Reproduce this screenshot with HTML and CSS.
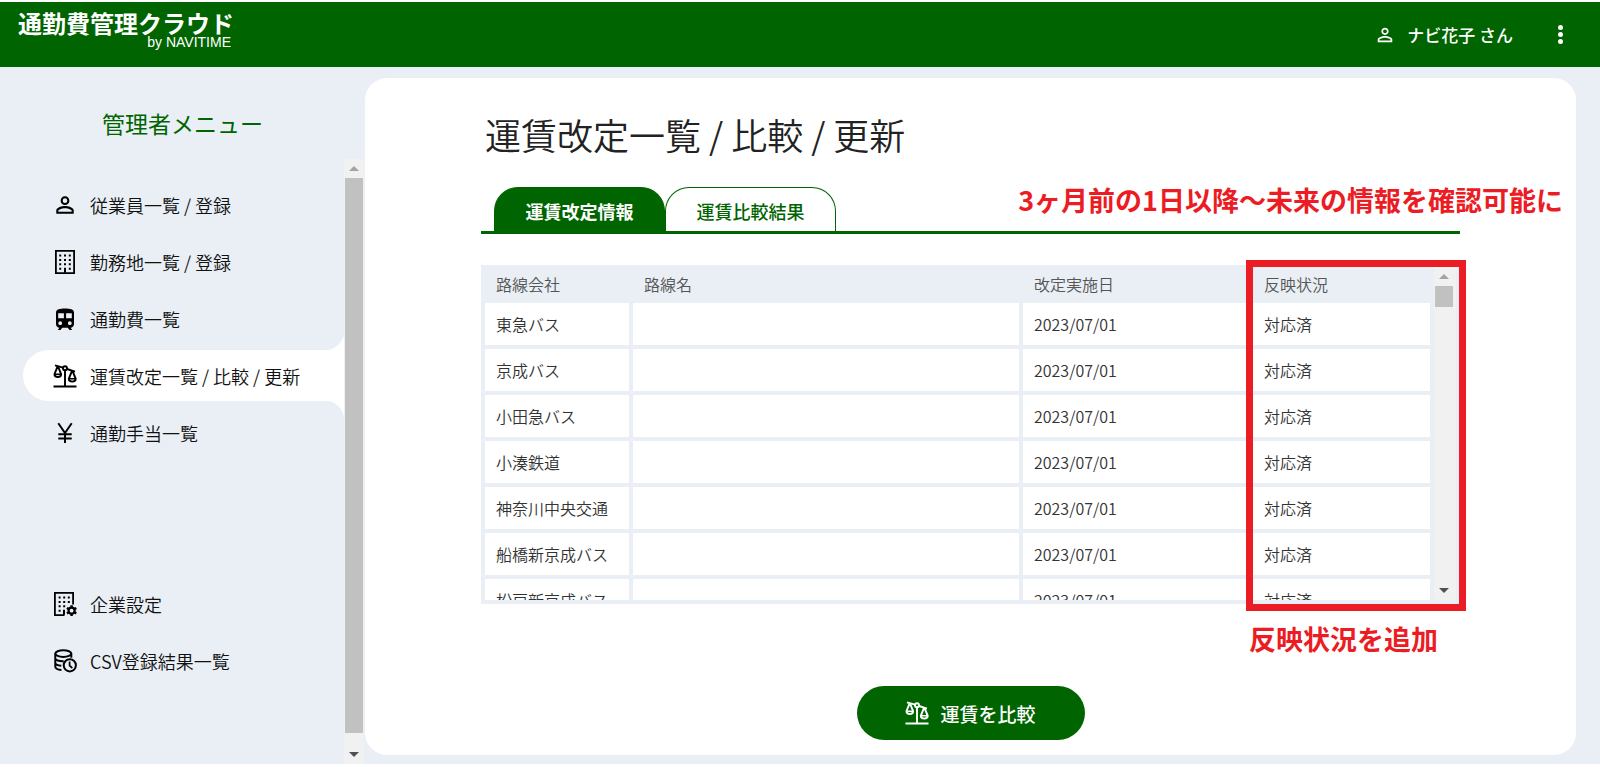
FILE: index.html
```html
<!DOCTYPE html>
<html lang="ja">
<head>
<meta charset="utf-8">
<meta name="viewport" content="width=device-width, initial-scale=1">
<title>通勤費管理クラウド</title>
<link rel="stylesheet" href="styles.css">
</head>
<body>
<svg class="defs" aria-hidden="true">
  <symbol id="i-person" viewBox="1 1 22 22"><path fill="currentColor" d="M12 5.9a2.1 2.1 0 110 4.2 2.1 2.1 0 010-4.2m0 9c2.97 0 6.1 1.46 6.1 2.1v1.1H5.9V17c0-.64 3.13-2.1 6.1-2.1M12 4C9.79 4 8 5.79 8 8s1.79 4 4 4 4-1.79 4-4-1.79-4-4-4zm0 9c-2.67 0-8 1.34-8 4v3h16v-3c0-2.66-5.33-4-8-4z"/></symbol>
  <symbol id="i-building" viewBox="0 0 24 26"><path fill="none" stroke="currentColor" stroke-width="1.8" d="M2.9 1.9h18.2v22.2H2.9z"/><path stroke="currentColor" stroke-width="2" stroke-dasharray="2 2.8" d="M6.2 6.5h12M6.2 10.9h12M6.2 15.3h12"/><path stroke="currentColor" stroke-width="2" d="M6.2 19.7h2M15.8 19.7h2M12 18.7v5"/></symbol>
  <symbol id="i-train" viewBox="0 0 24 26"><path fill="currentColor" fill-rule="evenodd" d="M12 2.4c-5 0-9 .6-9 4.4v11.1c0 2.1 1.5 3.6 3.4 3.8L4.8 24h2.6l1.9-2.2h5.4l1.9 2.2h2.6l-1.6-2.3c1.900-.2 3.400-1.700 3.400-3.800V6.800c0-3.800-4-4.400-9-4.400zM5.200 7.200h5.700v5H5.200zM13.100 7.200h5.700v5h-5.700zM7.200 15.300a1.900 1.900 0 100 3.800 1.900 1.900 0 000-3.800zM16.800 15.300a1.900 1.900 0 100 3.800 1.900 1.900 0 000-3.800z"/></symbol>
  <symbol id="i-scale" viewBox="0 0 24 24"><g fill="none" stroke="currentColor" stroke-width="1.9"><circle cx="12" cy="4.300" r="2"/><path d="M2 1.400l8 2.200M14 5l8 2.600M12 6.300v15.500M.500 22.500h23"/><path d="M4.600 2.400L1.500 10.200c0 3.700 6.600 3.700 6.600 0L5 2.400M19 6.800l-3.200 8c0 3.700 6.900 3.700 6.900 0l-3.200-8"/><path stroke-width="1.500" d="M1.500 10.200h6.600M15.800 14.800h6.900"/></g></symbol>
  <symbol id="i-yen" viewBox="0 0 24 24"><path fill="none" stroke="currentColor" stroke-width="2" d="M5.300 2.300L12 12l6.700-9.700M12 12v10M5.300 13.200h13.400M5.300 17.500h13.400"/></symbol>
  <symbol id="i-company" viewBox="0 0 24 26"><path fill="none" stroke="currentColor" stroke-width="1.800" d="M20.100 13.500V1.900H1.900v22.200h9.600"/><path stroke="currentColor" stroke-width="2" stroke-dasharray="2 2.600" d="M5.600 6.500h12M5.600 10.900h12M5.600 15.300h7"/><path stroke="currentColor" stroke-width="2" d="M5.600 19.700h2M11 18.700v5"/><circle cx="18.600" cy="19.700" r="3" fill="none" stroke="currentColor" stroke-width="2.200"/><path stroke="currentColor" stroke-width="2.400" d="M18.600 16.500v-2.200M18.600 22.900v2.200M21.400 18.100l1.900-1.100M15.800 21.300l-1.900 1.100M21.400 21.300l1.900 1.100M15.800 18.100l-1.900-1.100"/></symbol>
  <symbol id="i-data" viewBox="0 0 24 24"><g fill="none" stroke="currentColor" stroke-width="2"><ellipse cx="10.300" cy="4.600" rx="8" ry="3.300"/><path d="M2.300 4.600v13.200c0 1.700 2.700 2.900 6.200 3.200M18.300 4.600v4.200M2.300 9.200c0 1.800 3.600 3.200 8.400 3M2.300 13.700c0 1.500 2.400 2.700 6 3"/><circle cx="16.800" cy="16.300" r="6.100"/><path stroke-width="1.700" d="M16.600 12.600v4.100l2.700 2.300"/></g></symbol>
</svg>

<header class="header">
  <div class="logo">
    <span class="logo-name">通勤費管理クラウド</span>
    <span class="logo-by">by NAVITIME</span>
  </div>
  <div class="account">
    <svg class="account-icon" aria-hidden="true"><use href="#i-person"/></svg>
    <span>ナビ花子 さん</span>
    <button class="more" type="button" aria-label="メニューを開く"><i></i><i></i><i></i></button>
  </div>
</header>

<div class="layout">
  <aside class="sidebar">
    <h2 class="sidebar-title">管理者メニュー</h2>
    <div class="sidebar-body">
      <nav class="nav">
        <a class="nav-item" href="#"><svg aria-hidden="true"><use href="#i-person"/></svg>従業員一覧 / 登録</a>
        <a class="nav-item" href="#"><svg aria-hidden="true"><use href="#i-building"/></svg>勤務地一覧 / 登録</a>
        <a class="nav-item" href="#"><svg aria-hidden="true"><use href="#i-train"/></svg>通勤費一覧</a>
        <a class="nav-item nav-item-active" href="#" aria-current="page"><svg aria-hidden="true"><use href="#i-scale"/></svg>運賃改定一覧 / 比較 / 更新</a>
        <a class="nav-item" href="#"><svg aria-hidden="true"><use href="#i-yen"/></svg>通勤手当一覧</a>
        <a class="nav-item nav-item-spaced" href="#"><svg aria-hidden="true"><use href="#i-company"/></svg>企業設定</a>
        <a class="nav-item" href="#"><svg aria-hidden="true"><use href="#i-data"/></svg>CSV登録結果一覧</a>
      </nav>
      <div class="scrollbar" aria-hidden="true">
        <span class="arrow arrow-up"></span>
        <span class="thumb thumb-long"></span>
        <span class="arrow arrow-down"></span>
      </div>
    </div>
  </aside>

  <main class="panel">
    <h1 class="title">運賃改定一覧 / 比較 / 更新</h1>
    <div class="tabs" role="tablist">
      <button class="tab tab-active" type="button" role="tab" aria-selected="true">運賃改定情報</button>
      <button class="tab" type="button" role="tab" aria-selected="false">運賃比較結果</button>
      <p class="note note-period">3ヶ月前の1日以降～未来の情報を確認可能に</p>
    </div>

    <div class="fares">
      <div class="fares-view">
        <table class="fares-table">
          <colgroup><col class="col-company"><col><col class="col-date"><col class="col-status"></colgroup>
          <thead>
            <tr><th scope="col">路線会社</th><th scope="col">路線名</th><th scope="col">改定実施日</th><th scope="col">反映状況</th></tr>
          </thead>
          <tbody>
            <tr><td>東急バス</td><td></td><td>2023/07/01</td><td>対応済</td></tr>
            <tr><td>京成バス</td><td></td><td>2023/07/01</td><td>対応済</td></tr>
            <tr><td>小田急バス</td><td></td><td>2023/07/01</td><td>対応済</td></tr>
            <tr><td>小湊鉄道</td><td></td><td>2023/07/01</td><td>対応済</td></tr>
            <tr><td>神奈川中央交通</td><td></td><td>2023/07/01</td><td>対応済</td></tr>
            <tr><td>船橋新京成バス</td><td></td><td>2023/07/01</td><td>対応済</td></tr>
            <tr><td>松戸新京成バス</td><td></td><td>2023/07/01</td><td>対応済</td></tr>
          </tbody>
        </table>
        <div class="scrollbar" aria-hidden="true">
          <span class="arrow arrow-up"></span>
          <span class="thumb thumb-short"></span>
          <span class="arrow arrow-down"></span>
        </div>
      </div>
      <div class="highlight"></div>
      <p class="note note-status">反映状況を追加</p>
    </div>

    <button class="compare" type="button"><svg aria-hidden="true"><use href="#i-scale"/></svg>運賃を比較</button>
  </main>
</div>
</body>
</html>
```

FILE: styles.css
```css
:root {
  --green: #006400;
  --base: #e9eff5;
  --red: #ec1c24;
}

* {
  box-sizing: border-box;
}

body {
  display: flex;
  flex-direction: column;
  min-height: 100vh;
  margin: 0;
  padding: 2px 0 3px;
  background: #fff;
  color: #111;
  font-family: "Noto Sans CJK JP", sans-serif;
  font-size: 16px;
  overflow: hidden;
}

h1, h2, p {
  margin: 0;
}

button {
  border: 0;
  font-family: inherit;
  cursor: pointer;
}

.defs {
  position: absolute;
  width: 0;
  height: 0;
}

/* Header */
.header {
  display: flex;
  justify-content: space-between;
  height: 65px;
  padding: 0 33px 0 18px;
  background: var(--green);
  color: #fff;
}

.logo {
  display: flex;
  flex-direction: column;
  align-items: flex-end;
  padding-top: 9px;
}

.logo-name {
  font-size: 24px;
  font-weight: 700;
  line-height: 24px;
}

.logo-by {
  padding-right: 3px;
  font-family: "Liberation Sans", Arial, sans-serif;
  font-size: 14px;
  line-height: 15px;
}

.account {
  display: flex;
  align-items: center;
  font-size: 17px;
  font-weight: 500;
}

.account-icon {
  width: 20px;
  height: 20px;
  margin-right: 12px;
}

.more {
  display: flex;
  flex-direction: column;
  gap: 2px;
  margin-left: 41px;
  padding: 4px;
  background: none;
}

.more i {
  width: 5px;
  height: 5px;
  border-radius: 50%;
  background: #fff;
}

/* Layout */
.layout {
  display: flex;
  flex: 1;
  background: var(--base);
}

.sidebar {
  display: flex;
  flex-direction: column;
  flex: 0 0 365px;
}

.sidebar-title {
  padding: 39px 0 19px;
  color: var(--green);
  font-size: 23px;
  font-weight: 400;
  line-height: 34px;
  text-align: center;
}

.sidebar-body {
  display: flex;
  flex: 1;
}

.nav {
  display: flex;
  flex: 1;
  flex-direction: column;
  gap: 6px;
  padding: 20px 0 0 23px;
}

.nav-item {
  position: relative;
  display: flex;
  align-items: center;
  gap: 13px;
  height: 51px;
  padding-left: 30px;
  border-radius: 26px 0 0 26px;
  color: #111;
  font-size: 18px;
  font-weight: 350;
  text-decoration: none;
}

.nav-item svg {
  width: 24px;
  height: 26px;
  color: #000;
}

.nav-item-active {
  background: #fff;
}

.nav-item-active::before,
.nav-item-active::after {
  content: "";
  position: absolute;
  right: 0;
  width: 20px;
  height: 20px;
}

.nav-item-active::before {
  bottom: 100%;
  background: radial-gradient(circle at 0 0, transparent 20px, #fff 21px);
}

.nav-item-active::after {
  top: 100%;
  background: radial-gradient(circle at 0 100%, transparent 20px, #fff 21px);
}

.nav-item-spaced {
  margin-top: 114px;
}

/* Scrollbars */
.scrollbar {
  display: flex;
  flex: 0 0 20px;
  flex-direction: column;
  align-items: center;
  background: #f1f1f1;
}

.sidebar .scrollbar {
  margin-right: 1px;
}

.fares .scrollbar {
  flex-basis: 22px;
  padding: 2px 3px 0 0;
}

.arrow {
  margin: 7px 0;
  border: 5px solid transparent;
}

.arrow-up {
  border-top: 0;
  border-bottom-color: #a3a3a3;
}

.arrow-down {
  margin-top: auto;
  border-top-color: #505050;
  border-bottom: 0;
}

.thumb {
  width: 18px;
  background: #c1c1c1;
}

.thumb-long {
  flex: 1;
  margin-bottom: 19px;
}

.thumb-short {
  height: 21px;
}

/* Main panel */
.panel {
  display: flex;
  flex: 1;
  flex-direction: column;
  margin: 11px 24px 9px 0;
  padding: 30px 116px 15px;
  border-radius: 22px;
  background: #fff;
}

.title {
  padding-left: 4px;
  color: #222;
  font-size: 36px;
  font-weight: 350;
  line-height: 52px;
}

.tabs {
  position: relative;
  display: flex;
  margin-top: 27px;
  padding-left: 13px;
  border-bottom: 3px solid var(--green);
}

.tab {
  width: 171px;
  height: 44px;
  padding: 3px 0 0;
  border: 1px solid var(--green);
  border-bottom: 0;
  border-radius: 24px 24px 0 0;
  background: #fff;
  color: var(--green);
  font-size: 18px;
  font-weight: 500;
}

.tab-active {
  background: var(--green);
  color: #fff;
  font-weight: 700;
}

.note {
  position: absolute;
  color: var(--red);
  font-size: 27px;
  font-weight: 700;
  line-height: 36px;
  white-space: nowrap;
}

.note-period {
  right: -103px;
  bottom: 13px;
}

.fares {
  position: relative;
  margin-top: 31px;
}

.fares-view {
  display: flex;
  height: 339px;
  border-right: 4px solid var(--base);
  border-bottom: 4px solid var(--base);
  background: var(--base);
  overflow: hidden;
}

.fares-table {
  flex: 1;
  border-spacing: 4px;
  table-layout: fixed;
}

.col-company {
  width: 144px;
}

.col-date {
  width: 226px;
}

.col-status {
  width: 177px;
}

.fares-table th,
.fares-table td {
  padding: 0 11px;
  font-weight: 350;
  text-align: left;
  white-space: nowrap;
}

.fares-table th {
  height: 30px;
  color: #555;
  line-height: 30px;
}

.fares-table td {
  height: 42px;
  background: #fff;
  color: #333;
  line-height: 42px;
}

.highlight {
  position: absolute;
  top: -5px;
  right: -6px;
  bottom: -7px;
  width: 220px;
  border: 7px solid var(--red);
}

.note-status {
  top: 356px;
  right: 22px;
}

.compare {
  display: flex;
  align-items: center;
  align-self: center;
  justify-content: center;
  gap: 11px;
  width: 228px;
  height: 54px;
  margin-top: auto;
  border-radius: 27px;
  background: var(--green);
  color: #fff;
  font-size: 19px;
  font-weight: 500;
}

.compare svg {
  width: 24px;
  height: 24px;
}
```
